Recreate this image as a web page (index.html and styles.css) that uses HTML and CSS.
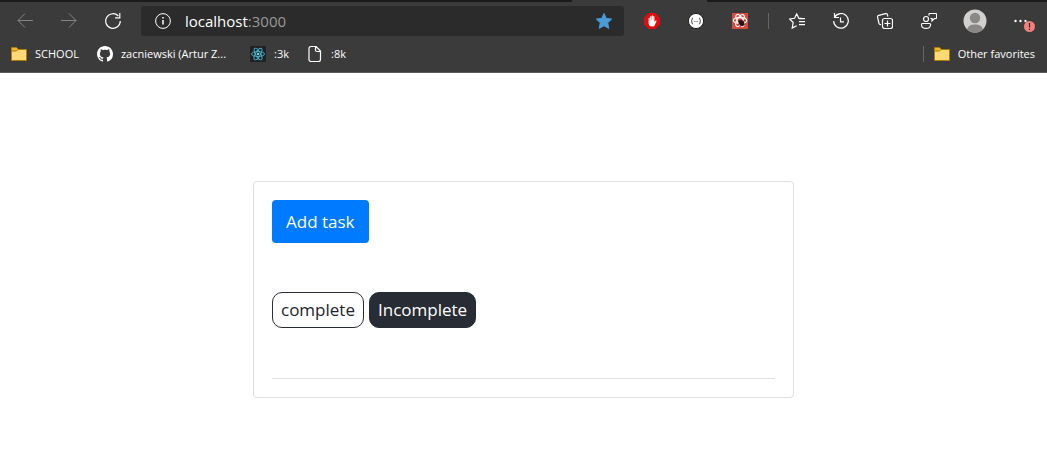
FILE: index.html
```
<!DOCTYPE html>
<html lang="en">
<head>
<meta charset="utf-8">
<meta name="viewport" content="width=device-width, initial-scale=1">
<title>Tasks</title>
<link rel="stylesheet" href="styles.css">
</head>
<body>
<header class="browser">
  <div class="tab-strip"><div class="tab-active"></div></div>
  <div class="toolbar">
    <button class="tool dim" aria-label="Back"><svg class="icon" viewBox="0 0 16 16"><path d="M16 7.500H1M8 .5l-7 7 7 7"/></svg></button>
    <button class="tool dim" aria-label="Forward"><svg class="icon" viewBox="0 0 16 16"><path d="M0 7.500h15M8 .5l7 7-7 7"/></svg></button>
    <button class="tool" aria-label="Refresh"><svg class="icon bold" viewBox="0 0 16 16"><path d="M15.300 8A7.300 7.300 0 1 1 13.300 3M14.800 0v4.800H10"/></svg></button>
    <div class="address">
      <svg class="icon" viewBox="0 0 16 16"><circle cx="8" cy="8" r="7.400"/><path d="M8 7v4.500M8 4v1.600" stroke-width="1.500"/></svg>
      <div class="url" role="textbox" aria-label="Address" contenteditable="true">localhost<span class="port">:3000</span></div>
      <button class="favorite" aria-label="Edit favorite"><svg class="icon" viewBox="0 0 16 16"><path class="star" d="M8 .5l2.300 5 5.400.6-4 3.700 1.100 5.600L8 12.700l-4.800 2.700 1.100-5.600-4-3.700 5.400-.6z"/></svg></button>
    </div>
    <button class="tool" aria-label="Content blocker"><svg class="icon plain" viewBox="0 0 16 16"><path fill="#e30b0f" d="M4.700 0h6.600L16 4.700v6.600L11.300 16H4.700L0 11.300V4.700z"/><path fill="#fff" d="M4.600 5.500c0-.9 1.200-.9 1.200 0v2h.3V3.700c0-.9 1.200-.9 1.200 0v3.500h.3V2.900c0-.9 1.300-.9 1.300 0v4.300h.3V3.700c0-.9 1.200-.9 1.200 0v5.200l.9-1.100c.6-.7 1.500-.2 1.200.5l-1.700 3.600C10.300 13 9.500 13.600 8.300 13.600c-2.400 0-3.700-1.300-3.700-3.600z"/></svg></button>
    <button class="tool" aria-label="JSON viewer"><svg class="icon plain" viewBox="0 0 16 16"><circle cx="8" cy="8" r="7.600" fill="#fff" stroke="#202020"/><path fill="none" stroke="#222" stroke-width=".9" d="M5 5c-1.600 0-.4 2.500-1.800 3 1.400.5.200 3 1.800 3M11 5c1.600 0 .4 2.500 1.800 3-1.400.5-.2 3-1.800 3"/><path stroke="#777" d="M5.900 8.500h.9M7.600 8.500h.9M9.300 8.500h.9"/></svg></button>
    <button class="tool" aria-label="React debugger"><svg class="icon plain" viewBox="0 0 16 16"><path fill="#d94a3d" d="M0 0h16v16H0z"/><g fill="none" stroke="#fff" stroke-width="1.100"><ellipse cx="8" cy="7.500" rx="6.700" ry="2.900"/><ellipse cx="8" cy="7.500" rx="6.700" ry="2.900" transform="rotate(60 8 7.500)"/><ellipse cx="8" cy="7.500" rx="6.700" ry="2.900" transform="rotate(120 8 7.500)"/></g><ellipse cx="9.500" cy="10" rx="2.600" ry="3.300" fill="#2a1513" transform="rotate(-35 9.500 10)"/><path stroke="#2a1513" stroke-width=".8" d="M6 8l7 4M6 11.500l6.500-4M8 13.500l1-6"/></svg></button>
    <span class="divider"></span>
    <button class="tool" aria-label="Favorites"><svg class="icon bold" viewBox="0 0 16 16"><path d="M12.500 5.300H9.800L7.700.8 5.600 5.300.6 6l3.600 3.500-1 5.600 4.500-2.400M10 5.600h6M10 8.600h6M10 11.600h6"/></svg></button>
    <button class="tool" aria-label="History"><svg class="icon bold" viewBox="0 0 16 16"><path d="M1.500 4.500A7.300 7.300 0 1 1 .7 8M1.500 0v4.500H6M7.500 4.500v4.300H11"/></svg></button>
    <button class="tool" aria-label="Collections"><svg class="icon bold" viewBox="0 0 16 16"><path d="M4 11.500c-1 .3-1.700-.3-2-1L.6 4.300c-.2-1 .2-1.700 1.200-2L8.500.7c1-.2 1.800.2 2 1.200l.4 1.600M7.500 5.500h6a2 2 0 0 1 2 2v6a2 2 0 0 1-2 2h-6a2 2 0 0 1-2-2v-6a2 2 0 0 1 2-2zM10.500 7.500v6M7.500 10.500h6"/></svg></button>
    <button class="tool" aria-label="Feedback"><svg class="icon bold" viewBox="0 0 16 16"><circle cx="5" cy="6" r="2.500"/><path d="M1.500 10.500h7c.8 0 1.200.4 1.100 1.200-.3 2.500-2 3.700-4.600 3.700S.7 14.200.4 11.700c-.1-.8.300-1.200 1.100-1.200zM8 2.500V1.300c0-.5.3-.8.800-.8h6c.5 0 .8.300.8.800v3.400c0 .5-.3.800-.8.800h-1.300L11 7.800V5.500H9.500"/></svg></button>
    <button class="tool profile" aria-label="Profile"><svg class="avatar" viewBox="0 0 24 24"><defs><clipPath id="face"><circle cx="12" cy="12" r="11.500"/></clipPath></defs><circle cx="12" cy="12" r="11.500" fill="#d2d0ce"/><g fill="#8a8886" clip-path="url(#face)"><circle cx="12" cy="9" r="5.200"/><path d="M3.500 24c0-6 3-8.500 8.500-8.500s8.500 2.500 8.500 8.500z"/></g></svg></button>
    <button class="tool" aria-label="Settings and more"><svg class="more" viewBox="0 0 24 24"><g fill="#fff"><circle cx="6.500" cy="12" r="1.200"/><circle cx="11.500" cy="12" r="1.200"/><circle cx="16.500" cy="12" r="1.200"/></g><circle cx="20.500" cy="17.500" r="5.500" fill="#f1807c"/><path stroke="#3b2524" stroke-width="1.200" d="M20.500 14v4.500M20.500 19.800V21"/></svg></button>
  </div>
  <nav class="bookmarks" aria-label="Favorites bar">
    <a class="bookmark" href="#"><svg class="icon folder" viewBox="0 0 16 16"><path d="M.5 14.500v-13h5l1.500 2h8.500v11z" fill="#ffd976" stroke="#ad7d0c"/><path d="M1 2h4.500L6.500 3.500 5.500 5H1z" fill="#f0b91d" stroke="none"/><path d="M1 5h4.500L7 3.500" stroke="#ad7d0c"/></svg>SCHOOL</a>
    <a class="bookmark" href="#"><svg class="icon plain" viewBox="0 0 16 16"><path fill="#fff" d="M8 0C3.580 0 0 3.580 0 8c0 3.540 2.290 6.530 5.470 7.590.4.070.55-.17.55-.38 0-.19-.01-.82-.01-1.490-2.010.37-2.530-.49-2.690-.94-.09-.23-.48-.94-.82-1.130-.28-.15-.68-.52-.01-.53.630-.01 1.080.58 1.230.82.72 1.210 1.870.87 2.330.66.07-.52.28-.87.51-1.070-1.780-.2-3.640-.89-3.640-3.950 0-.87.31-1.590.82-2.150-.08-.2-.36-1.020.08-2.120 0 0 .67-.21 2.200.82.64-.18 1.320-.27 2-.27s1.360.09 2 .27c1.530-1.040 2.200-.82 2.200-.82.44 1.100.16 1.920.08 2.120.51.56.82 1.270.82 2.150 0 3.070-1.870 3.750-3.650 3.950.29.25.54.73.54 1.480 0 1.070-.01 1.930-.01 2.200 0 .21.15.46.55.38A8.010 8.010 0 0 0 16 8c0-4.420-3.580-8-8-8z"/></svg>zacniewski (Artur Z...</a>
    <a class="bookmark react" href="#"><svg class="icon plain" viewBox="0 0 16 16"><rect width="16" height="16" rx="1" fill="#202124"/><g fill="none" stroke="#4fb3cc" stroke-width=".9"><ellipse cx="8" cy="8" rx="6.500" ry="2.500"/><ellipse cx="8" cy="8" rx="6.500" ry="2.500" transform="rotate(60 8 8)"/><ellipse cx="8" cy="8" rx="6.500" ry="2.500" transform="rotate(120 8 8)"/></g><circle cx="8" cy="8" r="1.300" fill="#61dafb"/></svg>:3k</a>
    <a class="bookmark" href="#"><svg class="icon bold" viewBox="0 0 16 16"><path d="M4 .5h5l4.500 4.500v8.500a2 2 0 0 1-2 2H4a2 2 0 0 1-2-2v-11a2 2 0 0 1 2-2zM8.500.5V4a1.500 1.500 0 0 0 1.500 1.500h3.500"/></svg>:8k</a>
    <a class="bookmark other" href="#"><svg class="icon folder" viewBox="0 0 16 16"><path d="M.5 14.500v-13h5l1.500 2h8.500v11z" fill="#ffd976" stroke="#ad7d0c"/><path d="M1 2h4.500L6.500 3.500 5.500 5H1z" fill="#f0b91d" stroke="none"/><path d="M1 5h4.500L7 3.500" stroke="#ad7d0c"/></svg>Other favorites</a>
  </nav>
</header>
<main class="page">
  <section class="card">
    <button class="add">Add task</button>
    <div class="filters">
      <button class="filter">complete</button>
      <button class="filter selected">Incomplete</button>
    </div>
    <hr class="rule">
  </section>
</main>
</body>
</html>
```
FILE: styles.css
```
* { box-sizing: border-box; }
body {
  margin: 0;
  background: #fff;
  color: #212529;
  font-family: "Open Sans", "Noto Sans", sans-serif;
}
button {
  border: 0;
  padding: 0;
  background: none;
  color: inherit;
  font: inherit;
}
.browser {
  background: #3b3b3b;
  border-bottom: 1px solid #5c5c5c;
  color: #fff;
}
.tab-strip {
  display: flex;
  height: 2px;
  background: #1b1b1b;
}
.tab-active {
  width: 135px;
  margin-left: 572px;
  background: #3b3b3b;
}
.toolbar {
  display: flex;
  align-items: center;
  padding: 4px 4px 0 3px;
}
.tool {
  display: flex;
  flex: none;
  align-items: center;
  justify-content: center;
  width: 44px;
  height: 30px;
}
.dim { color: #858585; }
.icon {
  flex: none;
  width: 16px;
  height: 16px;
  fill: none;
  stroke: currentColor;
}
.bold { stroke-width: 1.2; }
.plain { stroke: none; }
.address {
  display: flex;
  flex: 1;
  align-items: center;
  min-width: 0;
  height: 30px;
  margin: 0 6px;
  padding: 0 12px 0 14px;
  border-radius: 3px;
  background: #2b2b2b;
}
.url {
  flex: 1;
  margin-left: 14px;
  overflow: hidden;
  font-size: 15px;
  line-height: 20px;
  white-space: nowrap;
}
.port { color: #999; }
.favorite { display: flex; }
.star { fill: #4a9bd9; stroke: #4a9bd9; stroke-linejoin: round; }
.divider {
  width: 1px;
  height: 16px;
  margin: 0 6px;
  background: #666;
}
.profile { margin: 0 2px; }
.avatar, .more { width: 24px; height: 24px; }
.more { overflow: visible; }
.bookmarks {
  display: flex;
  align-items: center;
  gap: 18px;
  height: 36px;
  padding: 0 12px 0 11px;
}
.bookmark {
  display: flex;
  align-items: center;
  gap: 8px;
  color: inherit;
  font-size: 11px;
  line-height: 16px;
  text-decoration: none;
  white-space: nowrap;
}
.react { margin-left: 6px; }
.other {
  margin-left: auto;
  padding-left: 10px;
  border-left: 1px solid #666;
}
.page {
  display: flex;
  justify-content: center;
  padding: 108px 16px 51px;
}
.card {
  width: 100%;
  max-width: 541px;
  padding: 18px;
  border: 1px solid #dfdfdf;
  border-radius: 4px;
}
.add {
  padding: 8px 14px;
  border-radius: 4px;
  background: #007bff;
  color: #fff;
  font-size: 17px;
  line-height: 27px;
}
.filters {
  display: flex;
  gap: 5px;
  margin: 49px 0 50px;
}
.filter {
  padding: 4px 8px;
  border: 1px solid #282c34;
  border-radius: 10px;
  font-size: 17px;
  line-height: 26px;
}
.selected { background: #282c34; color: #fff; }
.rule {
  margin: 0;
  border: 0;
  border-top: 1px solid #dfdfdf;
}
```
